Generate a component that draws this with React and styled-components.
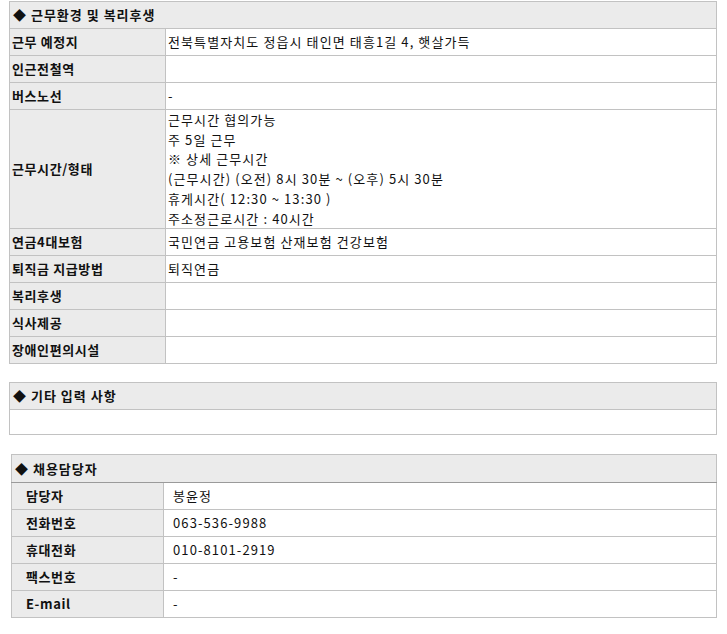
import React from "react";
import styled, { createGlobalStyle } from "styled-components";

const Global = createGlobalStyle`
    body {
        margin: 0;
        background: #fff;
        font-family: "Noto Sans CJK KR", "Noto Sans", sans-serif;
        font-size: 13px;
        color: #111;
    }
`;

const Page = styled.div`
    padding: 1px 10px 0 9px;
    display: flex;
    flex-direction: column;
    gap: 18px;
`;

const Table = styled.table`
    width: ${props => props.$inset ? "706px" : "708px"};
    margin-left: ${props => props.$inset ? "2px" : "0"};
    margin-top: ${props => props.$inset ? "1px" : "0"};
    border-collapse: collapse;
    border: 1px solid #c2c2c2;
    table-layout: fixed;
`;

const LabelCol = styled.col`
    width: ${props => props.$inset ? "152px" : "156px"};
`;

const Head = styled.th`
    height: ${props => props.$dark ? "27px" : "26px"};
    padding: 0 0 0 3px;
    background: #ebebeb;
    text-align: left;
    font-weight: bold;
    font-size: 13px;
    line-height: 18px;
    border-bottom: 1px solid ${props => props.$dark ? "#9a9a9a" : "#c2c2c2"};
    letter-spacing: 1px;
`;

const Label = styled.td`
    height: 26px;
    padding: 0 0 0 ${props => props.$inset ? "14px" : "2px"};
    background: #ebebeb;
    font-weight: bold;
    border: 1px solid #c2c2c2;
    border-left: none;
    line-height: 18px;
    letter-spacing: 0.6px;
    white-space: nowrap;
`;

const Value = styled.td`
    height: 26px;
    padding: 0 0 0 ${props => props.$inset ? "9px" : "2px"};
    border: 1px solid #c2c2c2;
    border-right: none;
    line-height: ${props => props.$tall ? "19.7px" : "18px"};
    letter-spacing: 1.1px;
    vertical-align: middle;
`;

const Empty = styled.td`
    height: 24px;
    padding: 0;
    border: none;
`;

const Line = styled.div``;

const work = [
    ["근무 예정지", "전북특별자치도 정읍시 태인면 태흥1길 4, 햇살가득"],
    ["인근전철역", ""],
    ["버스노선", "-"],
    ["근무시간/형태", [
        "근무시간 협의가능",
        "주 5일 근무",
        "※ 상세 근무시간",
        "(근무시간) (오전) 8시 30분 ~ (오후) 5시 30분",
        "휴게시간( 12:30 ~ 13:30 )",
        "주소정근로시간 : 40시간",
    ]],
    ["연금4대보험", "국민연금 고용보험 산재보험 건강보험"],
    ["퇴직금 지급방법", "퇴직연금"],
    ["복리후생", ""],
    ["식사제공", ""],
    ["장애인편의시설", ""],
];

const contact = [
    ["담당자", "봉윤정"],
    ["전화번호", "063-536-9988"],
    ["휴대전화", "010-8101-2919"],
    ["팩스번호", "-"],
    ["E-mail", "-"],
];

export default function App() {
    return <>
        <Global />
        <Page>
            <Table>
                <colgroup><LabelCol /><col /></colgroup>
                <thead>
                    <tr><Head colSpan={2}>◆ 근무환경 및 복리후생</Head></tr>
                </thead>
                <tbody>
                    {work.map(([k, v]) => <tr key={k}>
                        <Label>{k}</Label>
                        {Array.isArray(v)
                            ? <Value $tall>{v.map(l => <Line key={l}>{l}</Line>)}</Value>
                            : <Value>{v}</Value>}
                    </tr>)}
                </tbody>
            </Table>

            <Table>
                <thead>
                    <tr><Head>◆ 기타 입력 사항</Head></tr>
                </thead>
                <tbody>
                    <tr><Empty /></tr>
                </tbody>
            </Table>

            <Table $inset>
                <colgroup><LabelCol $inset /><col /></colgroup>
                <thead>
                    <tr><Head colSpan={2} $dark>◆ 채용담당자</Head></tr>
                </thead>
                <tbody>
                    {contact.map(([k, v]) => <tr key={k}>
                        <Label $inset>{k}</Label>
                        <Value $inset>{v}</Value>
                    </tr>)}
                </tbody>
            </Table>
        </Page>
    </>;
}
